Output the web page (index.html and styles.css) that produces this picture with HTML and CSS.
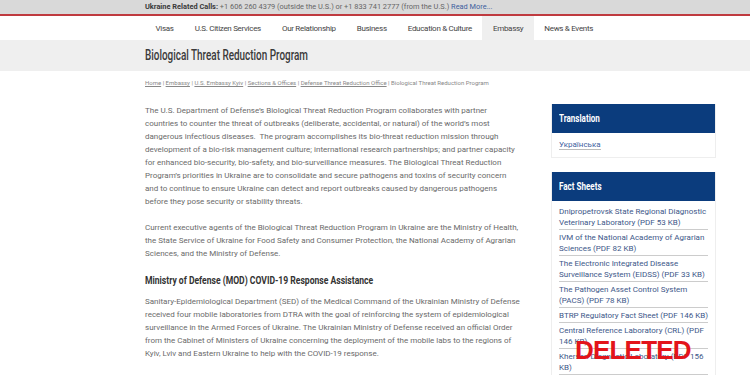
FILE: index.html
```html
<!DOCTYPE html>
<html lang="en">
<head>
    <meta charset="UTF-8">
    <meta name="viewport" content="width=device-width, initial-scale=1.0">
    <title>Biological Threat Reduction Program</title>
    <link rel="stylesheet" href="styles.css">
</head>
<body>
    <div class="topbar">
        <div class="wrap">
            <b>Ukraine Related Calls:</b> +1 606 260 4379 (outside the U.S.) or +1 833 741 2777 (from the U.S.) <a href="#">Read More...</a>
        </div>
    </div>
    <div class="nav">
        <div class="wrap nav-items">
            <a href="#">Visas</a>
            <a href="#">U.S. Citizen Services</a>
            <a href="#">Our Relationship</a>
            <a href="#">Business</a>
            <a href="#">Education &amp; Culture</a>
            <a href="#" class="active">Embassy</a>
            <a href="#">News &amp; Events</a>
        </div>
    </div>
    <div class="title-band">
        <div class="wrap"><h1><span class="cond">Biological Threat Reduction Program</span></h1></div>
    </div>
    <div class="wrap">
        <div class="crumbs">
            <a href="#">Home</a> | <a href="#">Embassy</a> | <a href="#">U.S. Embassy Kyiv</a> | <a href="#">Sections &amp; Offices</a> | <a href="#">Defense Threat Reduction Office</a> | Biological Threat Reduction Program
        </div>
        <div class="main">
            <div class="content">
                <p>The U.S. Department of Defense’s Biological Threat Reduction Program collaborates with partner countries to counter the threat of outbreaks (deliberate, accidental, or natural) of the world’s most dangerous infectious diseases.&nbsp; The program accomplishes its bio-threat reduction mission through development of a bio-risk management culture; international research partnerships; and partner capacity for enhanced bio-security, bio-safety, and bio-surveillance measures. The Biological Threat Reduction Program’s priorities in Ukraine are to consolidate and secure pathogens and toxins of security concern and to continue to ensure Ukraine can detect and report outbreaks caused by dangerous pathogens before they pose security or stability threats.</p>
                <p>Current executive agents of the Biological Threat Reduction Program in Ukraine are the Ministry of Health, the State Service of Ukraine for Food Safety and Consumer Protection, the National Academy of Agrarian Sciences, and the Ministry of Defense.</p>
                <h2><span class="cond">Ministry of Defense (MOD) COVID-19 Response Assistance</span></h2>
                <p>Sanitary-Epidemiological Department (SED) of the Medical Command of the Ukrainian Ministry of Defense received four mobile laboratories from DTRA with the goal of reinforcing the system of epidemiological surveillance in the Armed Forces of Ukraine. The Ukrainian Ministry of Defense received an official Order from the Cabinet of Ministers of Ukraine concerning the deployment of the mobile labs to the regions of Kyiv, Lviv and Eastern Ukraine to help with the COVID-19 response.</p>
                <p>On April 14, 2020, The Ministry of Defense began training its SED experts to use the mobile labs and set up field teams.</p>
            </div>
            <div class="sidebar">
                <div class="widget">
                    <div class="widget-head"><span class="cond">Translation</span></div>
                    <div class="widget-body">
                        <a href="#" class="lang">Українська</a>
                    </div>
                </div>
                <div class="widget">
                    <div class="widget-head"><span class="cond">Fact Sheets</span></div>
                    <div class="widget-body facts">
                        <a href="#">Dnipropetrovsk State Regional Diagnostic Veterinary Laboratory (PDF 53 KB)</a>
                        <a href="#">IVM of the National Academy of Agrarian Sciences (PDF 82 KB)</a>
                        <a href="#">The Electronic Integrated Disease Surveillance System (EIDSS) (PDF 33 KB)</a>
                        <a href="#">The Pathogen Asset Control System (PACS) (PDF 78 KB)</a>
                        <a href="#">BTRP Regulatory Fact Sheet (PDF 146 KB)</a>
                        <a href="#">Central Reference Laboratory (CRL) (PDF 146 KB)</a>
                        <a href="#">Kherson Diagnostic Laboratory (PDF 156 KB)</a>
                    </div>
                    <div class="stamp">DELETED</div>
                </div>
            </div>
        </div>
    </div>
</body>
</html>
```

FILE: styles.css
```css
body {
    margin: 0;
    font-family: Roboto, "Liberation Sans", sans-serif;
    color: #6a6a6a;
    background-color: #fff;
    overflow: hidden;
}
a {
    color: inherit;
    text-decoration: none;
}
.wrap {
    width: 571px;
    margin-left: 145px;
}
.cond {
    display: inline-block;
    white-space: nowrap;
    transform-origin: left center;
}
.topbar {
    background-color: #d9d9d9;
    border-bottom: 2px solid #bf3a3f;
    height: 14px;
    font-size: 7.4px;
    line-height: 14px;
    color: #666;
    white-space: nowrap;
}
.topbar b {
    color: #3a3a3a;
}
.topbar a {
    color: #3f5f9f;
}
.nav {
    height: 24px;
    background-color: #fff;
}
.nav-items {
    display: flex;
    height: 24px;
}
.nav-items a {
    display: flex;
    align-items: center;
    padding: 0 10.5px;
    font-size: 8px;
    letter-spacing: -0.3px;
    color: #444;
}
.nav-items a.active {
    background-color: #efefef;
}
.title-band {
    background-color: #efefef;
    height: 31px;
}
h1 {
    margin: 0;
    font-size: 15.5px;
    font-weight: 500;
    color: #3a3a3a;
    line-height: 31px;
}
h1 .cond {
    transform: scaleX(0.64);
}
.crumbs {
    margin-top: 7px;
    font-size: 6px;
    color: #888;
    line-height: 9px;
}
.crumbs a {
    text-decoration: underline;
}
.main {
    display: flex;
    gap: 31px;
    margin-top: 17px;
}
.content {
    width: 375px;
    font-size: 8px;
    line-height: 13px;
}
.content p {
    margin: 0 0 13px;
}
h2 {
    margin: 0 0 7px;
    font-size: 11px;
    font-weight: bold;
    color: #333;
    line-height: 15px;
}
h2 .cond {
    transform: scaleX(0.78);
}
.sidebar {
    width: 165px;
}
.widget {
    position: relative;
    margin-bottom: 14px;
    border: 1px solid #eee;
    border-top: none;
}
.widget-head {
    background-color: #0b3c7d;
    height: 29px;
    line-height: 29px;
    padding-left: 7px;
    color: #fff;
    font-size: 11.5px;
    font-weight: bold;
}
.widget-head .cond {
    transform: scaleX(0.7);
}
.widget-body {
    padding: 6px 7px 7px;
    font-size: 8px;
    line-height: 11px;
}
.lang {
    color: #3f5f9f;
    border-bottom: 1px solid #bbb;
}
.facts {
    display: flex;
    flex-direction: column;
    gap: 2px;
    padding-top: 5px;
}
.facts a {
    color: #3d5789;
    border-bottom: 1px solid #ccc;
    padding-bottom: 1px;
}
.stamp {
    position: absolute;
    left: 23px;
    top: 165px;
    font-family: "Liberation Sans", sans-serif;
    font-weight: bold;
    font-size: 26px;
    line-height: 26px;
    letter-spacing: -0.8px;
    color: #e3141b;
}
```
